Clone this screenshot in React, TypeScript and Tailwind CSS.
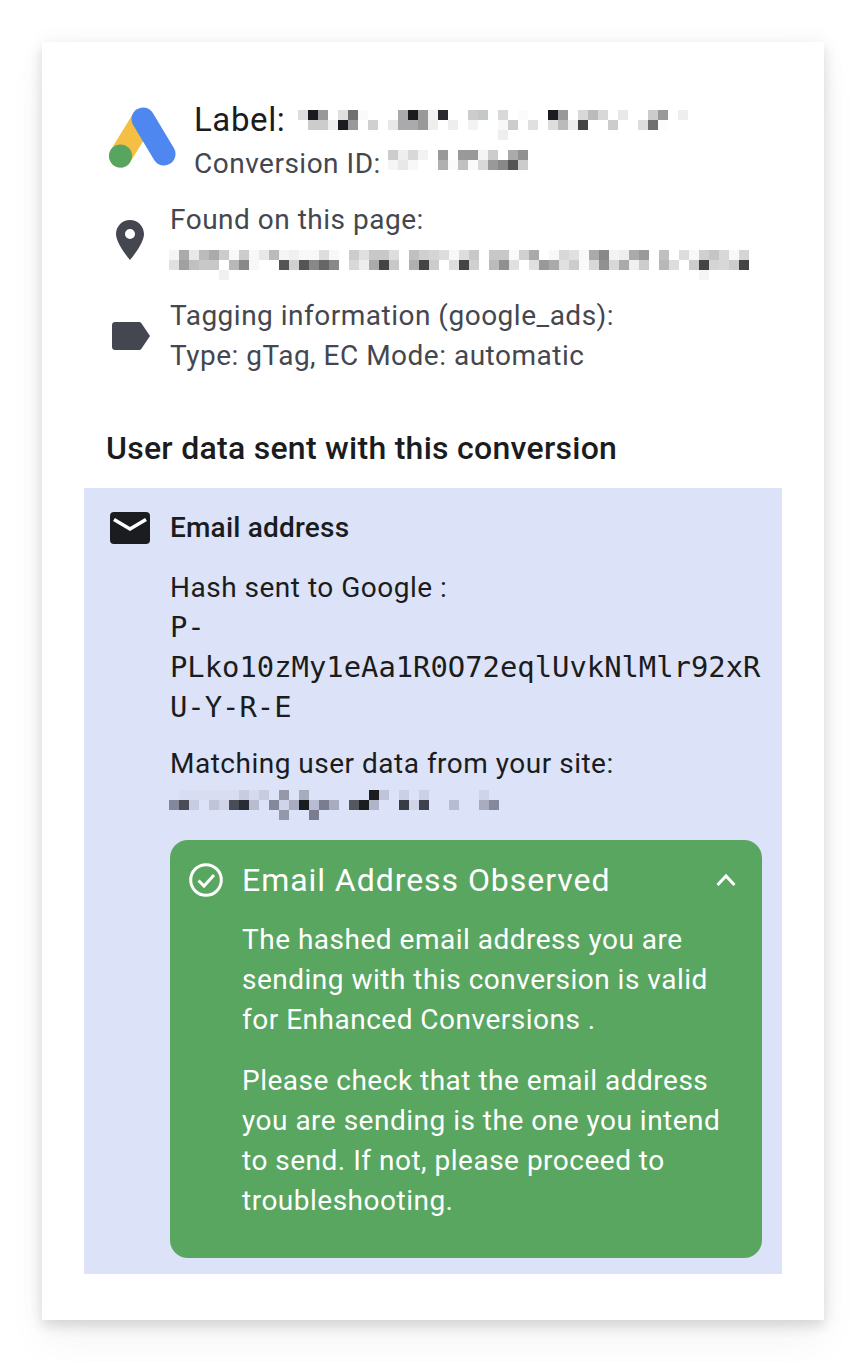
type Row = [number, string][]

// pixelated (redacted) values from the screenshot, each cell is 10x10
const labelRows: Row[] = [
  [[299,"#dddddd"],[309,"#1a1a1f"],[319,"#999999"],[339,"#e0e0e0"],[349,"#707070"],[359,"#fafafa"],[399,"#aaaaaa"],[409,"#1a1a1f"],[419,"#999999"],[429,"#f2f2f2"],[439,"#282a30"],[469,"#cccccc"],[479,"#c5c8c8"],[499,"#d8d8d8"],[519,"#fbfbfb"],[549,"#1a1c20"],[559,"#999999"],[579,"#d8d8d8"],[589,"#bbbbbb"],[599,"#d8d8d8"],[619,"#e8e8e8"],[649,"#cccccc"],[659,"#999999"],[679,"#eeeeee"]],
  [[309,"#cccccc"],[319,"#cccccc"],[329,"#eeeeee"],[339,"#1a1a1f"],[349,"#999999"],[369,"#d0d0d0"],[389,"#e8e8e8"],[399,"#aaaaaa"],[409,"#aaaaaa"],[419,"#999999"],[429,"#eeeeee"],[449,"#eeeeee"],[469,"#f3f3f3"],[499,"#f8f8f8"],[509,"#cccccc"],[529,"#e0e0e0"],[549,"#dddddd"],[559,"#bbbbbb"],[569,"#eeeeee"],[579,"#444444"],[609,"#cccccc"],[639,"#dddddd"],[649,"#707070"],[659,"#fcfcfc"]],
  [[499,"#eeeeee"]],
]

const conversionRows: Row[] = [
  [[389,"#cccccc"],[399,"#eeeeee"],[409,"#d8d8d8"],[419,"#f2f2f2"],[439,"#999999"],[459,"#999999"],[469,"#999999"],[479,"#f4f4f4"],[489,"#cccccc"],[509,"#aaaaaa"],[519,"#909090"]],
  [[389,"#f5f5f5"],[399,"#e8e8e8"],[409,"#f8f8f8"],[439,"#b0b0b0"],[449,"#fafafa"],[459,"#c0c0c0"],[469,"#fafafa"],[479,"#d8d8d8"],[489,"#999999"],[499,"#888888"],[509,"#555555"],[519,"#cccccc"]],
]

const seq = (colors: string[], start: number): Row =>
  colors.map((c, i) => [start + i * 10, c] as [number, string]).filter(([, c]) => c !== "")

const foundRows: Row[] = [
  seq(["#f5f5f5","#aaaaaa","#e8e8e8","#bbbbbb","#aaaaaa","#cccccc","#f8f8f8","#cccccc","#f8f8f8","#e8e8e8","#bbbbbb","#f5f5f5","#f0f0f0","#f8f8f8","#f8f8f8","#dddddd","#f8f8f8","","#cccccc","#e0e0e0","#c8c8c8","#c8c8c8","#dddddd","","#c0c0c0","#d0d0d0","#d5d5d5","#dddddd","#f8f8f8","#dddddd","#c8c8c8","","#c8c8c8","#c8c8c8","#fafafa","#d0d0d0","#aaaaaa","","#f8f8f8","#d8d8d8","#e0e0e0","#f8f8f8","#aaaaaa","#888888","#f3f3f3","#eeeeee","#aaaaaa","#999999","","#c0c0c0","","#dddddd","#f8f8f8","#d0d0d0","#c5c5c5","#d8d8d8","#f8f8f8","#d5d5d5"], 169),
  seq(["#e0e0e0","#a0a0a0","#c0c0c0","#c8c8c8","#c8c8c8","","#b8b8b8","#888888","#f8f8f8","","","#555555","#d0d0d0","#555555","#888888","#666666","#888888","","#d8d8d8","#eeeeee","#aaaaaa","#444444","#c8c8c8","","#b0b0b0","#444444","#cccccc","","#dddddd","#444444","#d0d0d0","","#bbbbbb","#909090","#e0e0e0","","#e0e0e0","#999999","#aaaaaa","#e0e0e0","#cccccc","#fafafa","#d8d8d8","#909090","#d8d8d8","#aaaaaa","#f0f0f0","#cccccc","","#b8b8b8","#dddddd","","#cccccc","#444444","#d5d5d5","#d8d8d8","#cccccc","#444444"], 169),
  [[219,"#f0f0f0"],[699,"#f5f5f5"]],
]

const emailRows: Row[] = [
  [[179,"#d9ddf2"],[189,"#d9ddf2"],[199,"#d9ddf2"],[209,"#d9ddf2"],[219,"#d9ddf2"],[229,"#d9ddf2"],[239,"#c8cce0"],[249,"#d6daee"],[259,"#c8cce0"],[279,"#9598a8"],[299,"#a8abbb"],[369,"#1a1c20"],[379,"#c0c4d8"],[399,"#ccd0e4"],[419,"#ccd0e4"],[479,"#d0d4e8"]],
  [[169,"#85889a"],[179,"#4a4c58"],[189,"#c8cce0"],[209,"#c0c4d8"],[219,"#d0d4e8"],[229,"#4a4c58"],[239,"#2a2c35"],[249,"#b8bcd0"],[269,"#85889a"],[279,"#d0d4e8"],[289,"#a8acc0"],[299,"#1a1c20"],[309,"#b8bcd0"],[319,"#7a7c90"],[329,"#a8acc0"],[349,"#55575f"],[359,"#1a1c20"],[369,"#b0b4c8"],[399,"#3a3c45"],[409,"#d0d4e8"],[419,"#3f414c"],[449,"#b8bcd0"],[479,"#a8acc0"],[489,"#85889a"]],
  [[279,"#9598a8"],[309,"#7a7c90"]],
]

function Mosaic({ rows, start, width, className }: { rows: Row[]; start: number; width: number; className?: string }) {
  return (
    <svg width={width} height={rows.length * 10} shapeRendering="crispEdges" className={className}>
      {rows.map((row, y) =>
        row.map(([x, c]) => <rect key={`${y}-${x}`} x={x - start} y={y * 10} width={10} height={10} fill={c} />),
      )}
    </svg>
  )
}

function AdsLogo() {
  return (
    <svg width="68" height="64" viewBox="0 0 68 64" className="ml-[24px] mt-[6px] shrink-0">
      <line x1="34" y1="15" x2="12.500" y2="50" stroke="#f4bf42" strokeWidth="23" strokeLinecap="round" />
      <line x1="35" y1="13" x2="56" y2="48" stroke="#4f87f0" strokeWidth="23" strokeLinecap="round" />
      <circle cx="12.500" cy="50" r="11.500" fill="#58a55f" />
    </svg>
  )
}

function PinIcon() {
  return (
    <svg width="28" height="40" viewBox="0 0 28 40" className="ml-[32px] mt-[20px] shrink-0">
      <path
        fillRule="evenodd"
        d="M14 0C6.300 0 0 6.200 0 14c0 9.600 14 26 14 26s14-16.400 14-26C28 6.200 21.700 0 14 0Zm0 19a5 5 0 1 1 0-10 5 5 0 0 1 0 10Z"
        fill="#44474f"
      />
    </svg>
  )
}

function TagIcon() {
  return (
    <svg width="38" height="28" viewBox="0 0 38 28" className="ml-[28px] mt-[26px] shrink-0">
      <path d="M3 0h24c1 0 1.800.5 2.400 1.300L38 14l-8.600 12.700c-.6.800-1.400 1.300-2.400 1.300H3c-1.700 0-3-1.300-3-3V3c0-1.700 1.300-3 3-3Z" fill="#44474f" />
    </svg>
  )
}

function MailIcon() {
  return (
    <svg width="40" height="32" viewBox="0 0 40 32" className="ml-[26px] mt-[4px] shrink-0">
      <rect width="40" height="32" rx="4" fill="#1a1c20" />
      <path d="M4 7.500l16 9.500 16-9.500" fill="none" stroke="#fff" strokeWidth="3.500" />
    </svg>
  )
}

function CheckCircle() {
  return (
    <svg width="34" height="34" viewBox="0 0 34 34" className="shrink-0">
      <circle cx="17" cy="17" r="15.300" fill="none" stroke="#fff" strokeWidth="3" />
      <path d="M9.500 17.500l5.500 5.500 10-11" fill="none" stroke="#fff" strokeWidth="3" />
    </svg>
  )
}

function ChevronUp() {
  return (
    <svg width="20" height="14" viewBox="0 0 20 14" className="shrink-0">
      <path d="M1.500 12L10 3l8.500 9" fill="none" stroke="#fff" strokeWidth="3" />
    </svg>
  )
}

export default function App() {
  return (
    <div className="bg-white p-[42px] font-['Roboto',sans-serif] text-[28px] leading-[40px] tracking-[0.5px]">
      <div className="bg-white px-[42px] pt-[58px] pb-[46px] shadow-[0_6px_12px_rgba(0,0,0,0.12),0_24px_40px_rgba(0,0,0,0.04),0_0_24px_rgba(0,0,0,0.05)]">
        <div className="flex">
          <AdsLogo />
          <div className="ml-[18px]">
            <div className="flex text-[33px] tracking-[0.6px] text-[#1a1c20]">
              <span className="w-[97px] shrink-0">Label:</span>
              <Mosaic rows={labelRows} start={292} width={400} className="mt-[10px]" />
            </div>
            <div className="mt-[4px] flex text-[#44474f]">
              <span className="w-[194px] shrink-0">Conversion ID:</span>
              <Mosaic rows={conversionRows} start={389} width={140} className="mt-[6px]" />
            </div>
          </div>
        </div>

        <div className="mt-[16px] flex text-[#44474f]">
          <PinIcon />
          <div className="ml-[26px]">
            Found on this page:
            <Mosaic rows={foundRows} start={169} width={590} className="-ml-px mt-[10px]" />
          </div>
        </div>

        <div className="mt-[16px] flex text-[#44474f]">
          <TagIcon />
          <div className="ml-[20px]">
            <div>Tagging information (google_ads):</div>
            <div>Type: gTag, EC Mode: automatic</div>
          </div>
        </div>

        <div className="mt-[52px] mb-[20px] pl-[22px] text-[32px] font-medium tracking-[0.27px] text-[#1a1c20]">
          User data sent with this conversion
        </div>

        <div className="bg-[#dce2f7] pt-[20px] pr-[20px] pb-[16px] text-[#1a1c20]">
          <div className="flex">
            <MailIcon />
            <div className="ml-[20px] font-medium tracking-[0.2px]">Email address</div>
          </div>

          <div className="ml-[86px]">
            <div className="mt-[20px]">Hash sent to Google :</div>
            <div className="-mt-px break-words font-['DejaVu_Sans_Mono',monospace] text-[28.85px] tracking-normal">
              P-PLko10zMy1eAa1R0O72eqlUvkNlMlr92xRU-Y-R-E
            </div>
            <div className="mt-[17px]">Matching user data from your site:</div>
            <Mosaic rows={emailRows} start={169} width={330} className="-ml-px mt-[6px]" />

            <div className="mt-[20px] rounded-[18px] bg-[#59a660] pt-[20px] pr-[26px] pb-[37px] pl-[19px] text-white">
              <div className="flex items-center">
                <CheckCircle />
                <div className="ml-[19px] flex-1 text-[32px] tracking-[0.95px]">Email Address Observed</div>
                <ChevronUp />
              </div>
              <div className="mt-[20px] pl-[53px]">
                <p>The hashed email address you are sending with this conversion is valid for Enhanced Conversions .</p>
                <p className="mt-[21px]">
                  Please check that the email address you are sending is the one you intend to send. If not, please proceed to troubleshooting.
                </p>
              </div>
            </div>
          </div>
        </div>
      </div>
    </div>
  )
}
